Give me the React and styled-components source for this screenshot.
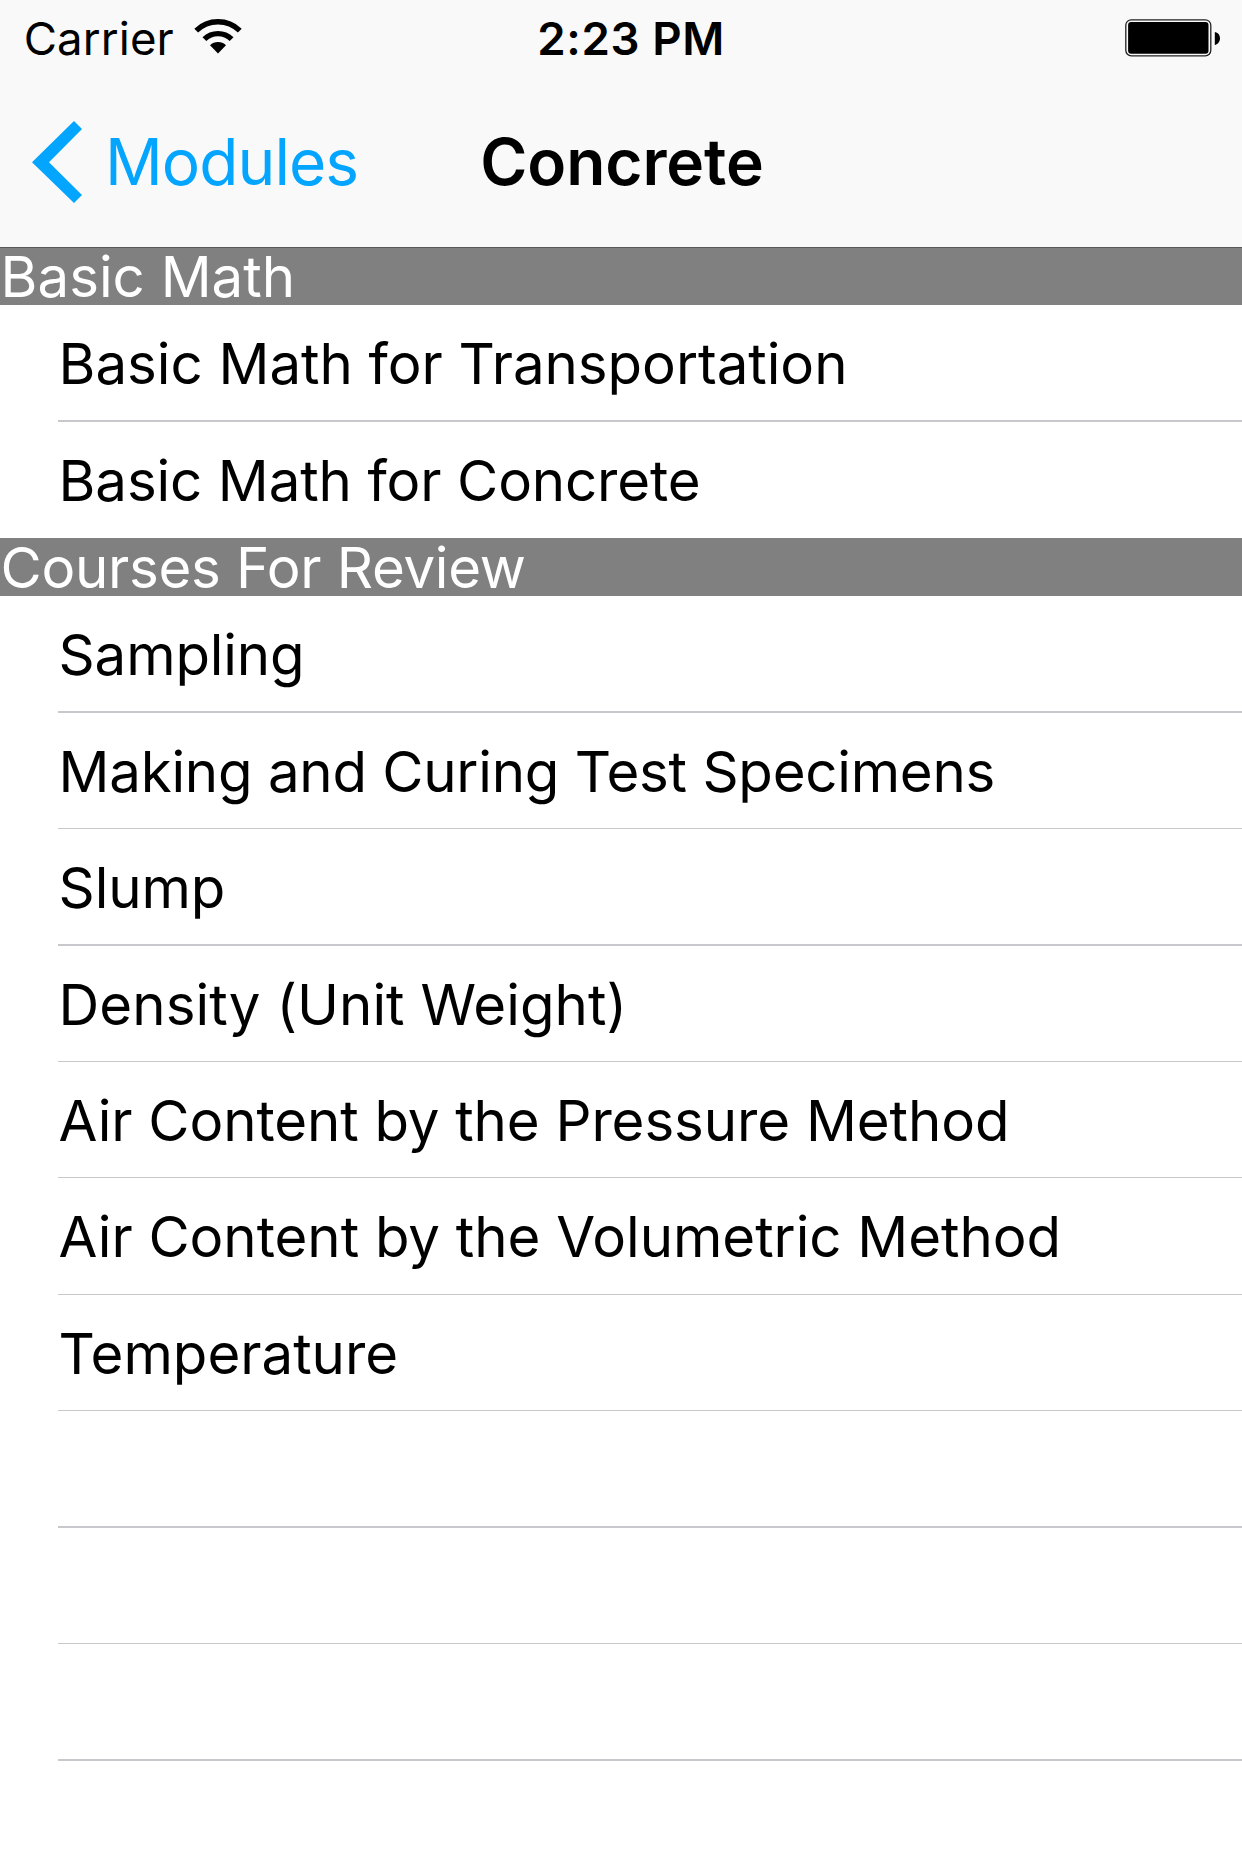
import React from 'react';
import styled, { createGlobalStyle } from 'styled-components';

const GlobalStyle = createGlobalStyle`
  * { box-sizing: border-box; }
  body {
    margin: 0;
    background: #fff;
    font-family: Inter, 'Liberation Sans', sans-serif;
    color: #000;
  }
`;

const Screen = styled.main`
  width: 1242px;
  height: 1858px;
  overflow: hidden;
  display: flex;
  flex-direction: column;
  background: #fff;
`;

const TopArea = styled.header`
  height: 248px;
  flex: none;
  background: #f9f9f9;
  border-bottom: 1px solid #595959;
`;

const StatusBar = styled.div`
  height: 78px;
  display: grid;
  grid-template-columns: 1fr auto 1fr;
  padding: 0 22px 0 23.7px;
  font-size: 45.6px;
  line-height: 78px;
`;

const Network = styled.div`
  display: flex;
  gap: 20.5px;
`;

const Carrier = styled.span`
  letter-spacing: 0.1px;
`;

const Clock = styled.time`
  font-weight: 600;
  letter-spacing: 0.6px;
  margin-right: -18.4px;
`;

const BatteryWrap = styled.div`
  display: flex;
  justify-content: flex-end;
`;

const NavBar = styled.nav`
  height: 169px;
  display: grid;
  grid-template-columns: 1fr auto 1fr;
  padding: 0 32px;
  font-size: 64px;
  line-height: 167px;
`;

const BackButton = styled.a`
  display: flex;
  gap: 23px;
  color: #03a5ff;
  letter-spacing: -0.95px;
`;

const Title = styled.h1`
  margin: 0 0 0 2px;
  font-size: 64px;
  font-weight: 600;
  letter-spacing: -0.1px;
`;

const Icon = styled.svg`
  display: block;
  flex: none;
  margin-top: ${(p) => p.$top}px;
`;

const SectionHeader = styled.h2`
  margin: 0;
  height: ${(p) => p.$height}px;
  flex: none;
  background: #808080;
  color: #fff;
  font-size: 56.4px;
  font-weight: 400;
  line-height: ${(p) => p.$line}px;
  letter-spacing: ${(p) => p.$tracking || 0}px;
  padding-left: 0.6px;
  white-space: nowrap;
`;

const List = styled.ul`
  list-style: none;
  margin: 0;
  padding: 0 0 0 58px;
`;

const Row = styled.li`
  height: ${(p) => p.$height}px;
  border-bottom: ${(p) => p.$rule}px solid #c8c7cc;
  font-size: 56.4px;
  line-height: 117px;
  letter-spacing: ${(p) => p.$tracking || 0}px;
  padding-left: 0.6px;
  white-space: nowrap;
`;

const basics = [
  { text: 'Basic Math for Transportation', height: 117, rule: 2, tracking: -0.03 },
  { text: 'Basic Math for Concrete', height: 116, rule: 0, tracking: -0.13 },
];

const courses = [
  { text: 'Sampling', height: 117, rule: 2, tracking: -0.15 },
  { text: 'Making and Curing Test Specimens', height: 116, rule: 1, tracking: -0.24 },
  { text: 'Slump', height: 117, rule: 2, tracking: -0.1 },
  { text: 'Density (Unit Weight)', height: 116, rule: 1, tracking: 0.05 },
  { text: 'Air Content by the Pressure Method', height: 116, rule: 1, tracking: -0.07 },
  { text: 'Air Content by the Volumetric Method', height: 117, rule: 1, tracking: -0.03 },
  { text: 'Temperature', height: 116, rule: 1 },
  { text: '', height: 117, rule: 2 },
  { text: '', height: 116, rule: 1 },
  { text: '', height: 117, rule: 2 },
];

const WifiIcon = () => (
  <Icon $top={18} width="48" height="36" viewBox="0 0 48 36" fill="none" stroke="#000">
    <path d="M2.2 12.6A31.2 31.2 0 0 1 45.8 12.6" strokeWidth="5.4" />
    <path d="M10.4 21.2A19.3 19.3 0 0 1 37.6 21.2" strokeWidth="5.4" />
    <path d="M24 35.4L16 27.3A11.4 11.4 0 0 1 32 27.3Z" fill="#000" stroke="none" />
  </Icon>
);

const BatteryIcon = () => (
  <Icon $top={18} width="96" height="40" viewBox="0 0 96 40">
    <rect x="1.8" y="1.8" width="85" height="36" rx="5.5" fill="none" stroke="#222" strokeWidth="1.3" />
    <rect x="4.1" y="4.1" width="80.4" height="31.6" rx="3" fill="#000" />
    <path d="M90.8 14C94 14.6 96 17 96 20.2S94 26.2 90.8 27Z" fill="#000" />
  </Icon>
);

const ChevronIcon = () => (
  <Icon $top={43} width="50" height="82" viewBox="0 0 50 82">
    <path d="M42 0L50 8L17 41.3L50 74L42 82L0 41.3Z" fill="#03a5ff" />
  </Icon>
);

const Rows = ({ items }) => (
  <List>
    {items.map((item, i) => (
      <Row key={i} $height={item.height} $rule={item.rule} $tracking={item.tracking}>
        {item.text}
      </Row>
    ))}
  </List>
);

export default function App() {
  return (
    <Screen>
      <GlobalStyle />
      <TopArea>
        <StatusBar>
          <Network>
            <Carrier>Carrier</Carrier>
            <WifiIcon />
          </Network>
          <Clock>2:23 PM</Clock>
          <BatteryWrap>
            <BatteryIcon />
          </BatteryWrap>
        </StatusBar>
        <NavBar>
          <BackButton>
            <ChevronIcon />
            <span>Modules</span>
          </BackButton>
          <Title>Concrete</Title>
        </NavBar>
      </TopArea>
      <SectionHeader $height={57} $line={57}>Basic Math</SectionHeader>
      <Rows items={basics} />
      <SectionHeader $height={58} $line={59} $tracking={-0.3}>Courses For Review</SectionHeader>
      <Rows items={courses} />
    </Screen>
  );
}
